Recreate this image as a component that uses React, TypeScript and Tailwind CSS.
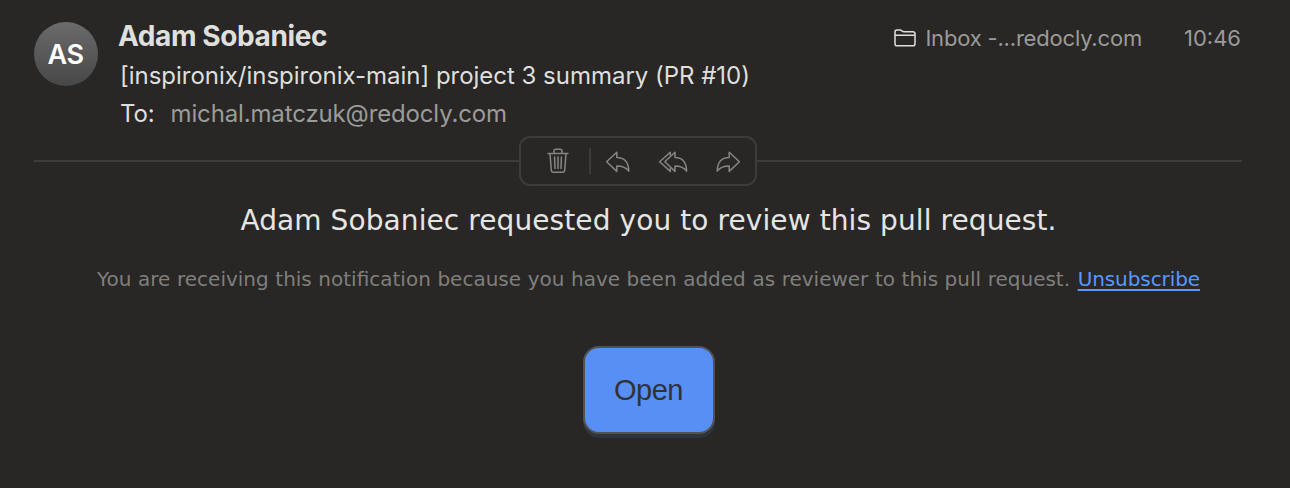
const TrashIcon = () => (
  <svg width="22" height="26" viewBox="0 0 22 26" fill="none" stroke="currentColor" strokeWidth="1.5" strokeLinecap="round" strokeLinejoin="round">
    <path d="M1 5.5H21M3 5.5L4.3 22.2Q4.5 24.3 6.5 24.3H15.5Q17.5 24.3 17.7 22.2L19 5.5M7 5.2V3Q7 1.2 8.8 1.2H13.2Q15 1.2 15 3V5.2M7.6 9L8 20.5M11 9V20.5M14.4 9L14 20.5" />
  </svg>
);

const ReplyIcon = ({ className = '' }: { className?: string }) => (
  <svg className={className} width="25" height="22" viewBox="0 0 25 22" fill="none" stroke="currentColor" strokeWidth="1.5" strokeLinejoin="round">
    <path d="M1.6 10.8L11.8 1.2V6.4C19.5 6.4 23.6 11.6 23.8 20.2C21.2 16.4 18 15 11.8 15V20.4Z" />
  </svg>
);

const ReplyAllIcon = () => (
  <svg width="30" height="22" viewBox="0 0 30 22" fill="none" stroke="currentColor" strokeWidth="1.5" strokeLinejoin="round">
    <path d="M12.3 4.4V1.2L1.6 10.8L12.3 20.4V17.2" />
    <path d="M6.8 10.8L17 1.2V6.4C24.3 6.4 28.4 11.6 28.6 20.2C26 16.4 23 15 17 15V20.4Z" />
  </svg>
);

const FolderIcon = () => (
  <svg width="22" height="18" viewBox="0 0 22 18" fill="none" stroke="currentColor" strokeWidth="1.5" strokeLinejoin="round">
    <path d="M1 14.7V3Q1 1 3 1H6.2Q7 1 7.7 1.7L8.3 2.2Q9 2.7 10 2.7H18.8Q21 2.7 21 4.8V14.7Q21 16.8 18.8 16.8H3.2Q1 16.8 1 14.7ZM1 6.2H21" />
  </svg>
);

export default function App() {
  return (
    <div className="h-[488px] w-[1290px] overflow-hidden whitespace-nowrap bg-[#282725] font-['Inter',sans-serif] text-[#dfdfde]">
      {/* --- Message header --- */}
      <header className="flex items-start pl-[34px] pr-[49px] pt-4">
        <div className="mt-1.5 flex size-16 items-center justify-center rounded-full bg-linear-to-b from-[#6b6b6b] to-[#474747] pr-px pt-[3px] text-[27px] font-semibold tracking-[-0.5px] text-white">
          AS
        </div>
        <div className="ml-5 flex-1">
          <h1 className="h-10 text-[28px] font-bold leading-10 tracking-[-0.4px]">Adam Sobaniec</h1>
          <p className="h-[38px] pl-0.5 pt-px text-2xl leading-[38px] tracking-[-0.02px]">[inspironix/inspironix-main] project 3 summary (PR #10)</p>
          <p className="flex h-[38px] gap-4 pl-0.5 pt-px text-2xl leading-[38px] tracking-[-0.14px]">
            <span>To:</span>
            <span className="text-[#9b9b9a]">michal.matczuk@redocly.com</span>
          </p>
        </div>
        <div className="flex h-11 items-center text-[22px] tracking-[-0.19px] text-[#9b9b9a]">
          <span className="text-[#dfdfde]"><FolderIcon /></span>
          <span className="ml-[9px]">Inbox -...redocly.com</span>
          <span className="ml-[42px] tracking-normal">10:46</span>
        </div>
      </header>

      {/* --- Divider with message actions --- */}
      <div className="mt-1 flex items-center pl-[34px] pr-12">
        <div className="h-0.5 w-[485px] bg-[#3d3c3a]" />
        <div className="flex h-[50px] w-[238px] items-center rounded-[11px] border-2 border-[#3d3c3a] pl-[26px] text-[#858583]">
          <button><TrashIcon /></button>
          <div className="ml-5 h-[26px] w-0.5 bg-[#3d3c3a]" />
          <button className="ml-[14px] mt-px"><ReplyIcon /></button>
          <button className="ml-7 mt-px"><ReplyAllIcon /></button>
          <button className="ml-7 mt-px"><ReplyIcon className="-scale-x-100" /></button>
        </div>
        <div className="h-0.5 flex-1 bg-[#3d3c3a]" />
      </div>

      {/* --- Message body --- */}
      <main className="flex flex-col items-center pl-[7px] font-['DejaVu_Sans',sans-serif]">
        <h2 className="h-[68px] pt-px text-[28px] leading-[68px] tracking-[0.09px] text-[#e5e5e4]">Adam Sobaniec requested you to review this pull request.</h2>
        <p className="h-[50px] text-xl leading-[50px] text-[#7f7f7d] [word-spacing:0.22px]">
          You are receiving this notification because you have been added as reviewer to this pull request.{' '}
          <a href="#" className="ml-px tracking-[-0.09px] text-[#579aff] underline decoration-2 underline-offset-3">Unsubscribe</a>
        </p>
        <button className="mt-[42px] h-[88px] w-[132px] rounded-[16px] border-2 border-[#52524f] bg-[#578ff5] pt-0.5 font-['Liberation_Sans',sans-serif] text-[29px] tracking-[-0.5px] text-[#303235] shadow-[0_4px_0_#2d343c]">
          Open
        </button>
      </main>
    </div>
  );
}
